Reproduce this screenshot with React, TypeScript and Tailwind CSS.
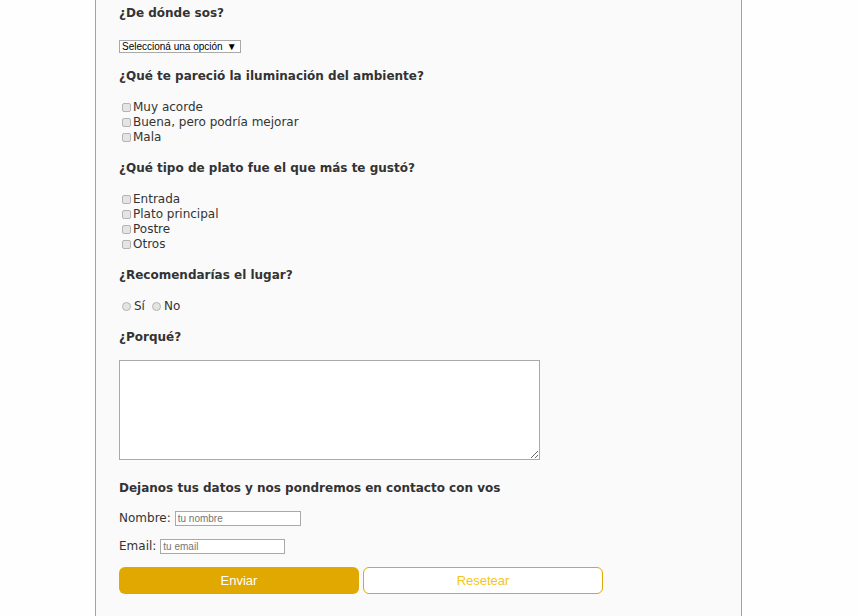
import React from "react";

const Check = ({ label }: { label: string }) => (
  <div className="flex items-center h-[15px]">
    <span className="ml-[3px] mr-[2px] w-[9px] h-[9px] rounded-[2px] border border-[#b4b4b4] bg-[#e4e4e4]" />
    <span>{label}</span>
  </div>
);

const Radio = ({ label }: { label: string }) => (
  <span className="inline-flex items-center mr-[4px]">
    <span className="ml-[3px] mr-[3px] w-[9px] h-[9px] rounded-full border border-[#b4b4b4] bg-[#e4e4e4]" />
    <span>{label}</span>
  </span>
);

const Heading = ({ children, mb = "mb-[16px]" }: { children: React.ReactNode; mb?: string }) => (
  <h3 className={`font-bold h-[15px] leading-[15px] ${mb}`}>{children}</h3>
);

export default function App() {
  return (
    <div className="w-[858px] h-[616px] overflow-hidden bg-[#fefefe]">
      <div
        className="ml-[95px] w-[647px] min-h-[616px] border-x border-[#dba400] bg-[#fafafa] pl-[23px] pt-[6px] text-[12px] leading-[15px] text-[#333]"
        style={{ fontFamily: '"DejaVu Sans", Verdana, sans-serif' }}
      >
        <Heading mb="mb-[19px]">¿De dónde sos?</Heading>
        <div className="flex h-[13px] mb-[16px]">
          <span
            className="inline-flex items-center w-[122px] h-[13px] border border-[#a9a9a9] bg-white pl-[2px] text-[10px] leading-[10px] text-black"
            style={{ fontFamily: '"Liberation Sans", Arial, sans-serif' }}
          >
            Seleccioná una opción
            <span className="ml-[4px] text-[10px]">▼</span>
          </span>
        </div>

        <Heading>¿Qué te pareció la iluminación del ambiente?</Heading>
        <div className="mb-[16px]">
          <Check label="Muy acorde" />
          <Check label="Buena, pero podría mejorar" />
          <Check label="Mala" />
        </div>

        <Heading>¿Qué tipo de plato fue el que más te gustó?</Heading>
        <div className="mb-[16px]">
          <Check label="Entrada" />
          <Check label="Plato principal" />
          <Check label="Postre" />
          <Check label="Otros" />
        </div>

        <Heading>¿Recomendarías el lugar?</Heading>
        <div className="flex h-[15px] mb-[16px]">
          <Radio label="Sí" />
          <Radio label="No" />
        </div>

        <Heading mb="mb-[15px]">¿Porqué?</Heading>
        <textarea className="block w-[421px] h-[100px] border border-[#a9a9a9] bg-white mb-[21px]" />

        <Heading mb="mb-[15px]">Dejanos tus datos y nos pondremos en contacto con vos</Heading>
        <div className="flex items-center h-[15px] mb-[13px]">
          <span>Nombre:</span>
          <span
            className="ml-[4px] inline-flex items-center w-[126px] h-[15px] border border-[#a9a9a9] bg-white pl-[2px] text-[10px] text-[#757575]"
            style={{ fontFamily: '"Liberation Sans", Arial, sans-serif' }}
          >
            tu nombre
          </span>
        </div>
        <div className="flex items-center h-[15px] mb-[13px]">
          <span>Email:</span>
          <span
            className="ml-[4px] inline-flex items-center w-[125px] h-[15px] border border-[#a9a9a9] bg-white pl-[2px] text-[10px] text-[#757575]"
            style={{ fontFamily: '"Liberation Sans", Arial, sans-serif' }}
          >
            tu email
          </span>
        </div>

        <div
          className="flex gap-[4px] text-[13px]"
          style={{ fontFamily: '"Liberation Sans", Arial, sans-serif' }}
        >
          <button className="w-[240px] h-[27px] rounded-[6px] bg-[#e0a800] text-white">Enviar</button>
          <button className="w-[240px] h-[27px] rounded-[6px] border border-[#e0a800] bg-white text-[#f5c518]">Resetear</button>
        </div>
      </div>
    </div>
  );
}
